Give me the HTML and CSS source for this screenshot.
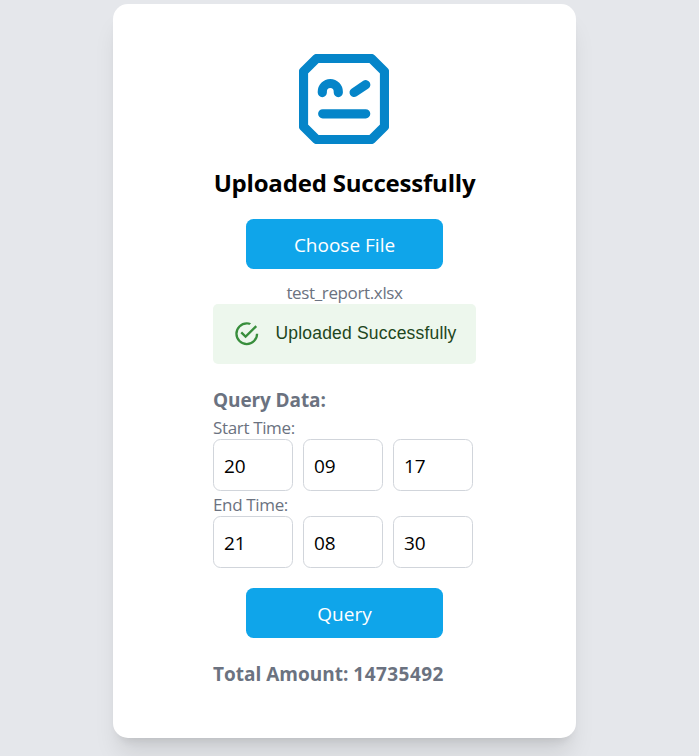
FILE: index.html
```html
<!DOCTYPE html>
<html lang="en">
<head>
<meta charset="utf-8">
<title>Report Query</title>
<link rel="stylesheet" href="styles.css">
</head>
<body>
<main class="card">
  <svg class="logo" viewBox="0 0 90 90" aria-hidden="true">
    <path d="M17.6 4.5H72.4L85.5 17.6V72.4L72.4 85.5H17.6L4.5 72.4V17.6Z"/>
    <path d="M23.3 38.6V37.7a8 8.2 0 0 1 16 0V38.6M55.1 38.5L66.8 30.7M23.7 59.8H66.7"/>
  </svg>
  <h1 class="title">Uploaded Successfully</h1>
  <button class="button">Choose File</button>
  <p class="filename">test_report.xlsx</p>
  <div class="alert">
    <svg class="alert-icon" viewBox="0 0 24 24" aria-hidden="true">
      <path d="M20,12A8,8 0 0,1 12,20A8,8 0 0,1 4,12A8,8 0 0,1 12,4C12.76,4 13.5,4.11 14.2,4.31L15.77,2.74C14.61,2.26 13.34,2 12,2A10,10 0 0,0 2,12A10,10 0 0,0 12,22A10,10 0 0,0 22,12M7.91,10.08L6.5,11.5L11,16L21,6L19.59,4.58L11,13.17L7.91,10.08Z"/>
    </svg>
    <span class="alert-text">Uploaded Successfully</span>
  </div>
  <section class="query">
    <h2 class="subtitle">Query Data:</h2>
    <p class="label">Start Time:</p>
    <div class="fields">
      <input class="field" value="20"><input class="field" value="09"><input class="field" value="17">
    </div>
    <p class="label">End Time:</p>
    <div class="fields">
      <input class="field" value="21"><input class="field" value="08"><input class="field" value="30">
    </div>
  </section>
  <button class="button query-button">Query</button>
  <p class="subtitle total">Total Amount: <span class="amount">14735492</span></p>
</main>
</body>
</html>
```
FILE: styles.css
```css
* { box-sizing: border-box; margin: 0; padding: 0; }
body {
  height: 756px;
  padding: 4px 0 0 113px;
  overflow: hidden;
  background: #e5e7eb;
  color: #6b7280;
  font-family: "Open Sans", "Noto Sans", sans-serif;
}
.card {
  display: flex;
  flex-direction: column;
  align-items: center;
  width: 463px;
  height: 734px;
  padding: 50px 100px;
  border-radius: 15px;
  background: #fff;
  box-shadow: 0 20px 25px -5px rgb(0 0 0 / .1), 0 8px 10px -6px rgb(0 0 0 / .1);
}
.logo {
  flex: none;
  width: 90px;
  height: 90px;
  margin-right: 1px;
  fill: none;
  stroke: #0585c9;
  stroke-width: 9.2;
  stroke-linecap: round;
  stroke-linejoin: round;
}
.title {
  height: 40px;
  margin-top: 19px;
  color: #000;
  font-size: 24px;
  font-weight: 700;
  line-height: 40px;
  letter-spacing: -.2px;
  white-space: nowrap;
}
.button {
  flex: none;
  width: 197px;
  height: 50px;
  margin-top: 16px;
  padding-top: 2px;
  border: 0;
  border-radius: 7.5px;
  background: #0fa5ea;
  color: #fff;
  font: 19px/48px "Open Sans", sans-serif;
}
.filename {
  height: 24px;
  margin-top: 11px;
  font-size: 17px;
  line-height: 26px;
  letter-spacing: -.36px;
}
.alert {
  display: flex;
  flex: none;
  align-items: center;
  width: 263px;
  height: 60px;
  padding-left: 20px;
  border-radius: 5px;
  background: #edf7ed;
  color: #1e4620;
  font-family: "Liberation Sans", sans-serif;
  font-size: 17.5px;
  letter-spacing: .19px;
  line-height: 25px;
  white-space: nowrap;
}
.alert-icon { width: 27.5px; height: 27.5px; margin-right: 15px; fill: #388e3c; }
.alert-text { padding-bottom: 2px; }
.query { width: 263px; margin-top: 22px; }
.subtitle { height: 28px; font-size: 19px; font-weight: 700; line-height: 28px; letter-spacing: -.1px; white-space: nowrap; }
.label { height: 25px; font-size: 17px; line-height: 27px; letter-spacing: -.35px; }
.fields { display: flex; gap: 10px; height: 52px; }
.field {
  width: 80px;
  height: 52px;
  padding: 2px 10px 0;
  border: 1px solid #d1d5db;
  border-radius: 7.5px;
  background: #fff;
  color: #000;
  font: 19px "Open Sans", sans-serif;
}
.query-button { margin-top: 20px; }
.total { width: 263px; margin-top: 22px; letter-spacing: 0; }
.amount { letter-spacing: .45px; }
```
